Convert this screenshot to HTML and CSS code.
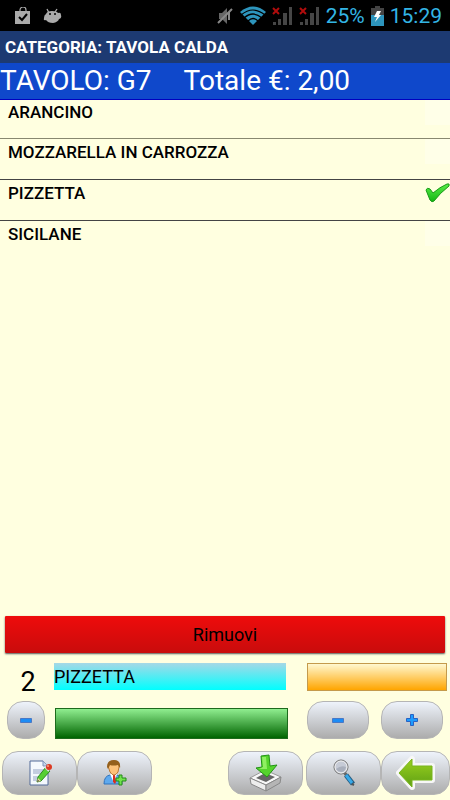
FILE: index.html
```html
<!DOCTYPE html>
<html lang="it">
<head>
    <meta charset="UTF-8">
    <meta name="viewport" content="width=device-width, initial-scale=1.0">
    <title>Categoria: Tavola Calda</title>
    <link rel="stylesheet" href="styles.css">
</head>
<body>

    <div class="app">
        <div class="status-bar">
            <div class="status-group notifications">
                <svg width="16" height="18" viewBox="0 0 16 18">
                    <path d="M5 5V3a3 3 0 0 1 6 0v2" fill="none" stroke="#aaa" stroke-width="1.2"/>
                    <path d="M0 4h15v13H0z" fill="#aaa"/>
                    <path d="M4 10l3 3 5-6" fill="none" stroke="#000" stroke-width="2"/>
                </svg>
                <svg width="19" height="16" viewBox="0 0 19 16">
                    <path d="M4 1l2 4M14 1l-2 3" stroke="#aaa" stroke-width="1.3"/>
                    <path d="M3 6Q4 3 9 3t6 2q3-1 3 2 1 3-2 4-1 3-6 4-5 0-7-3-3 1-2-2 0-3 2-4z" fill="#aaa"/>
                    <circle cx="7" cy="6" r="1" fill="#000"/>
                    <circle cx="12" cy="6" r="1" fill="#000"/>
                </svg>
            </div>
            <div class="status-group system">
                <svg width="17" height="18" viewBox="0 0 17 18">
                    <path d="M2 6h3l5-5v16l-5-5H2z" fill="#666"/>
                    <path d="M12 5v8M1 16L15 2" stroke="#888" stroke-width="2"/>
                </svg>
                <svg width="26" height="19" viewBox="0 0 26 19">
                    <path d="M0 6Q13-5 26 6L13 19z" fill="#2d95bd"/>
                    <path d="M1 9Q13-1 25 9M4 12Q13 4 22 12M8 15Q13 10 18 15" fill="none" stroke="#000" stroke-width="1.2"/>
                </svg>
                <svg width="21" height="20" viewBox="0 0 21 20">
                    <path d="M1 16h3v3H1zM6 13h3v6H6zM11 7h4v12h-4zM17 1h3v18h-3z" fill="#464646"/>
                    <path d="M1 2l6 6M7 2L1 8" stroke="#b00c0c" stroke-width="2"/>
                </svg>
                <svg width="21" height="20" viewBox="0 0 21 20">
                    <path d="M1 16h3v3H1zM6 13h3v6H6zM11 7h4v12h-4zM17 1h3v18h-3z" fill="#464646"/>
                    <path d="M1 2l6 6M7 2L1 8" stroke="#b00c0c" stroke-width="2"/>
                </svg>
                <span class="battery-level">25%</span>
                <svg width="13" height="20" viewBox="0 0 13 20">
                    <path d="M4 0h5v2h4v18H0V2h4z" fill="#444"/>
                    <path d="M0 9h13v11H0z" fill="#2d95bd"/>
                    <path d="M6 5h4L8 9h2l-6 7 2-5H3z" fill="#fff"/>
                </svg>
                <span class="clock">15:29</span>
            </div>
        </div>

        <h1 class="title-bar">CATEGORIA: TAVOLA CALDA</h1>
        <div class="order-bar">
            <span>TAVOLO: G7</span>
            <span>Totale €: 2,00</span>
        </div>

        <ul class="product-list">
            <li><label class="product">ARANCINO <input type="checkbox" class="tick"></label></li>
            <li><label class="product">MOZZARELLA IN CARROZZA <input type="checkbox" class="tick"></label></li>
            <li>
                <label class="product">PIZZETTA
                    <input type="checkbox" class="tick" checked>
                    <svg class="tick-mark" width="25" height="22" viewBox="0 0 25 22">
                        <defs>
                            <linearGradient id="tick-green" x1="0" y1="0" x2="0" y2="1">
                                <stop offset="0" stop-color="#5cf04a"/>
                                <stop offset="1" stop-color="#12b512"/>
                            </linearGradient>
                        </defs>
                        <path d="M1 8q1-3 4-1l3 4Q15 5 22 2q3-1 2 2Q15 11 9 19q-2 2-4-1z" fill="url(#tick-green)" stroke="#189a18" stroke-width="1"/>
                    </svg>
                </label>
            </li>
            <li><label class="product">SICILANE <input type="checkbox" class="tick"></label></li>
        </ul>

        <div class="panel">
            <button class="remove">Rimuovi</button>

            <div class="row fields">
                <output class="quantity">2</output>
                <input type="text" class="name" value="PIZZETTA" aria-label="Prodotto">
                <button class="orange" aria-label="Prezzo"></button>
            </div>

            <div class="row steppers">
                <button class="pill step" aria-label="Meno">
                    <svg width="12" height="12" viewBox="0 0 12 12"><path d="M.5 4.500h11v4H.5z" fill="#1c8cf5" stroke="#4a78c4"/></svg>
                </button>
                <button class="green" aria-label="Varianti"></button>
                <div class="step-pair">
                    <button class="pill" aria-label="Diminuisci">
                        <svg width="12" height="12" viewBox="0 0 12 12"><path d="M.5 4.500h11v4H.5z" fill="#1c8cf5" stroke="#4a78c4"/></svg>
                    </button>
                    <button class="pill" aria-label="Aumenta">
                        <svg width="12" height="12" viewBox="0 0 12 12"><path d="M4.500.5h3v4h4v3h-4v4h-3v-4h-4v-3h4z" fill="#1c9cff" stroke="#2862c4"/></svg>
                    </button>
                </div>
            </div>

            <div class="toolbar">
                <button class="pill tool" aria-label="Note">
                    <svg width="24" height="26" viewBox="0 0 24 26">
                        <path d="M2 1h13l5 5v19H2z" fill="#f4f8fd" stroke="#536b99"/>
                        <path d="M15 1v5h5" fill="#c9d6ea" stroke="#7d93bb"/>
                        <path d="M5 9h11v5H5zM5 16h5v5H5z" fill="#c3cde0"/>
                        <path d="M18 7l4 4-9 10-4 1 1-5z" fill="#55cf32" stroke="#2c8a1c"/>
                        <path d="M9 22l1-4 3 3z" fill="#e8cf9b"/>
                        <path d="M9 22l1-2 1 1z" fill="#222"/>
                        <path d="M17 7l4 4" stroke="#ddd" stroke-width="2"/>
                        <circle cx="21" cy="7" r="3" fill="#dc3a22"/>
                        <circle cx="20" cy="6" r="1" fill="#ff9c82"/>
                    </svg>
                </button>
                <button class="pill tool" aria-label="Aggiungi cliente">
                    <svg width="24" height="26" viewBox="0 0 24 26">
                        <path d="M1 24q0-8 6-9h7q5 2 5 9z" fill="#5ea9ee" stroke="#2f72bd"/>
                        <path d="M7 14l4 9 3-9z" fill="#fff"/>
                        <path d="M10 15h2l1 7-1 2-2-2z" fill="#d92d20"/>
                        <path d="M5 6q0-5 6-5t5 6l-1 5q-4 6-8 0z" fill="#fcc279" stroke="#bd7b35"/>
                        <path d="M4 7q0-7 7-7t6 8l-2-3q-5 1-8 0L5 9z" fill="#94601c"/>
                        <path d="M16 15h3v3h4v3h-4v4h-3v-4h-3v-3h3z" fill="#72e34c" stroke="#238a18"/>
                    </svg>
                </button>
                <div class="toolbar-end">
                    <button class="pill tool save" aria-label="Salva">
                        <svg width="34" height="38" viewBox="0 0 34 38">
                            <path d="M1 24l15-8 16 7-15 8z" fill="#f7f7f7" stroke="#999"/>
                            <path d="M7 24l9-5 10 4-9 5z" fill="#666"/>
                            <path d="M1 24l16 7v6L2 30z" fill="#ededed" stroke="#888"/>
                            <path d="M32 23l-15 8v6l14-8z" fill="#b5b5b5" stroke="#888"/>
                            <path d="M12 2l8-1 1 11 7-1-10 12-11-9 6-1z" fill="#55d42c" stroke="#239416"/>
                            <path d="M13 3h4l1 12-8 0 4-2z" fill="#8fef62"/>
                        </svg>
                    </button>
                    <button class="pill tool" aria-label="Cerca">
                        <svg width="22" height="28" viewBox="0 0 22 28">
                            <path d="M11 13l3 4" stroke="#666" stroke-width="3"/>
                            <ellipse cx="8" cy="8" rx="7" ry="7" fill="#cfd3dc" stroke="#6e6e6e"/>
                            <ellipse cx="8" cy="8" rx="6" ry="6" fill="#c6cbd6" stroke="#eee"/>
                            <path d="M3 10q5-4 10-2-1 5-5 5-3 0-5-3z" fill="#a9afbc"/>
                            <path d="M13 16l7 9" stroke="#275d82" stroke-width="5"/>
                            <path d="M13 16l6 8" stroke="#38a9e8" stroke-width="3"/>
                            <path d="M19 25l2 1" stroke="#555" stroke-width="2"/>
                        </svg>
                    </button>
                    <button class="pill tool back" aria-label="Indietro">
                        <svg width="40" height="36" viewBox="0 0 40 36">
                            <defs>
                                <linearGradient id="back-green" x1="0" y1="0" x2="0" y2="1">
                                    <stop offset="0" stop-color="#9ad11f"/>
                                    <stop offset="1" stop-color="#5e9f14"/>
                                </linearGradient>
                            </defs>
                            <path d="M3 18L16 4v7h20v14H16v7z" fill="#f7f7f7" stroke="#f7f7f7" stroke-width="6" stroke-linejoin="round"/>
                            <path d="M3 18L16 4v7h20v14H16v7z" fill="url(#back-green)" stroke="#79b51c" stroke-width="1"/>
                        </svg>
                    </button>
                </div>
            </div>
        </div>
    </div>

</body>
</html>
```
FILE: styles.css
```css
* {
    box-sizing: border-box;
}
body {
    font-family: Roboto, "Liberation Sans", sans-serif;
    font-size: 17px;
    margin: 0;
    background-color: #ffffe0;
    color: #000;
}
button, input {
    font: inherit;
    color: inherit;
    margin: 0;
    padding: 0;
}
svg {
    display: block;
    flex: none;
}
.app {
    display: flex;
    flex-direction: column;
    min-height: 100vh;
}

/* Header */
.status-bar {
    display: flex;
    justify-content: space-between;
    align-items: center;
    height: 31px;
    padding: 0 8px 0 15px;
    background: #000;
    color: #33b5e5;
    font-size: 21px;
}
.status-group {
    display: flex;
    align-items: center;
}
.notifications {
    gap: 12px;
}
.system {
    gap: 6px;
}
.title-bar {
    margin: 0;
    padding: 0 5px;
    background: #1d3a72;
    color: #fff;
    font-size: 17px;
    font-weight: 700;
    line-height: 32px;
}
.order-bar {
    display: flex;
    gap: 32px;
    background: #0f48cb;
    border-bottom: 1px solid #0000c0;
    color: #fff;
    font-size: 28px;
    line-height: 36px;
}

/* Products */
.product-list {
    flex: 1;
    margin: 0;
    padding: 0;
    list-style: none;
}
.product-list li {
    height: 41px;
    border-bottom: 1px solid #444;
}
.product-list li:first-child {
    height: 39px;
    border-color: #888870;
}
.product-list li:last-child {
    border-bottom: none;
}
.product {
    display: grid;
    grid-template-columns: 1fr 25px;
    padding-left: 8px;
    font-weight: 500;
    line-height: 26px;
}
.product-list li:first-child .product {
    line-height: 24px;
}
.tick {
    appearance: none;
    grid-area: 1 / 2;
    width: 25px;
    height: 25px;
    background: #ffffe8;
}
.tick:checked {
    background: none;
}
.tick-mark {
    grid-area: 1 / 2;
    align-self: center;
}

/* Bottom panel */
.remove {
    display: block;
    width: calc(100% - 10px);
    height: 37px;
    margin: 0 5px 10px;
    border: none;
    border-radius: 1px;
    background: linear-gradient(#ee0c0c, #c90c0c);
    box-shadow: 0 1px 2px #555;
    font-size: 18px;
}
.row {
    display: grid;
    grid-template-columns: 38px 1fr 140px;
    padding: 0 3px 0 7px;
}
.fields {
    height: 38px;
    align-items: start;
}
.quantity {
    padding-left: 4px;
    text-align: center;
    font-size: 27px;
    line-height: 38px;
}
.name {
    min-width: 0;
    height: 27px;
    margin: 0 21px 0 9px;
    border: none;
    border-radius: 0;
    background: linear-gradient(#a6d8e6, #00ffff);
    font-size: 18px;
}
.orange {
    height: 28px;
    border: 1px solid #c49a4c;
    background: linear-gradient(#fff8d0, #ffa500);
}
.steppers {
    align-items: end;
    margin-bottom: 12px;
}
.green {
    height: 31px;
    margin: 0 19px 0 10px;
    border: 1px solid #1d6b1d;
    background: linear-gradient(#90ee90, #006400);
}
.pill {
    display: flex;
    justify-content: center;
    align-items: center;
    height: 38px;
    border: 1px solid #b5b5b5;
    border-radius: 16px;
    background: linear-gradient(#eef3fb, #acacac);
}
.step-pair {
    display: flex;
    gap: 12px;
}
.step-pair .pill {
    width: 62px;
}
.toolbar {
    display: flex;
    padding: 0 0 5px 2px;
}
.toolbar-end {
    display: flex;
    margin-left: auto;
}
.tool {
    width: 75px;
    height: 44px;
}
.save {
    margin-right: 3px;
}
.back {
    width: 69px;
}
```
